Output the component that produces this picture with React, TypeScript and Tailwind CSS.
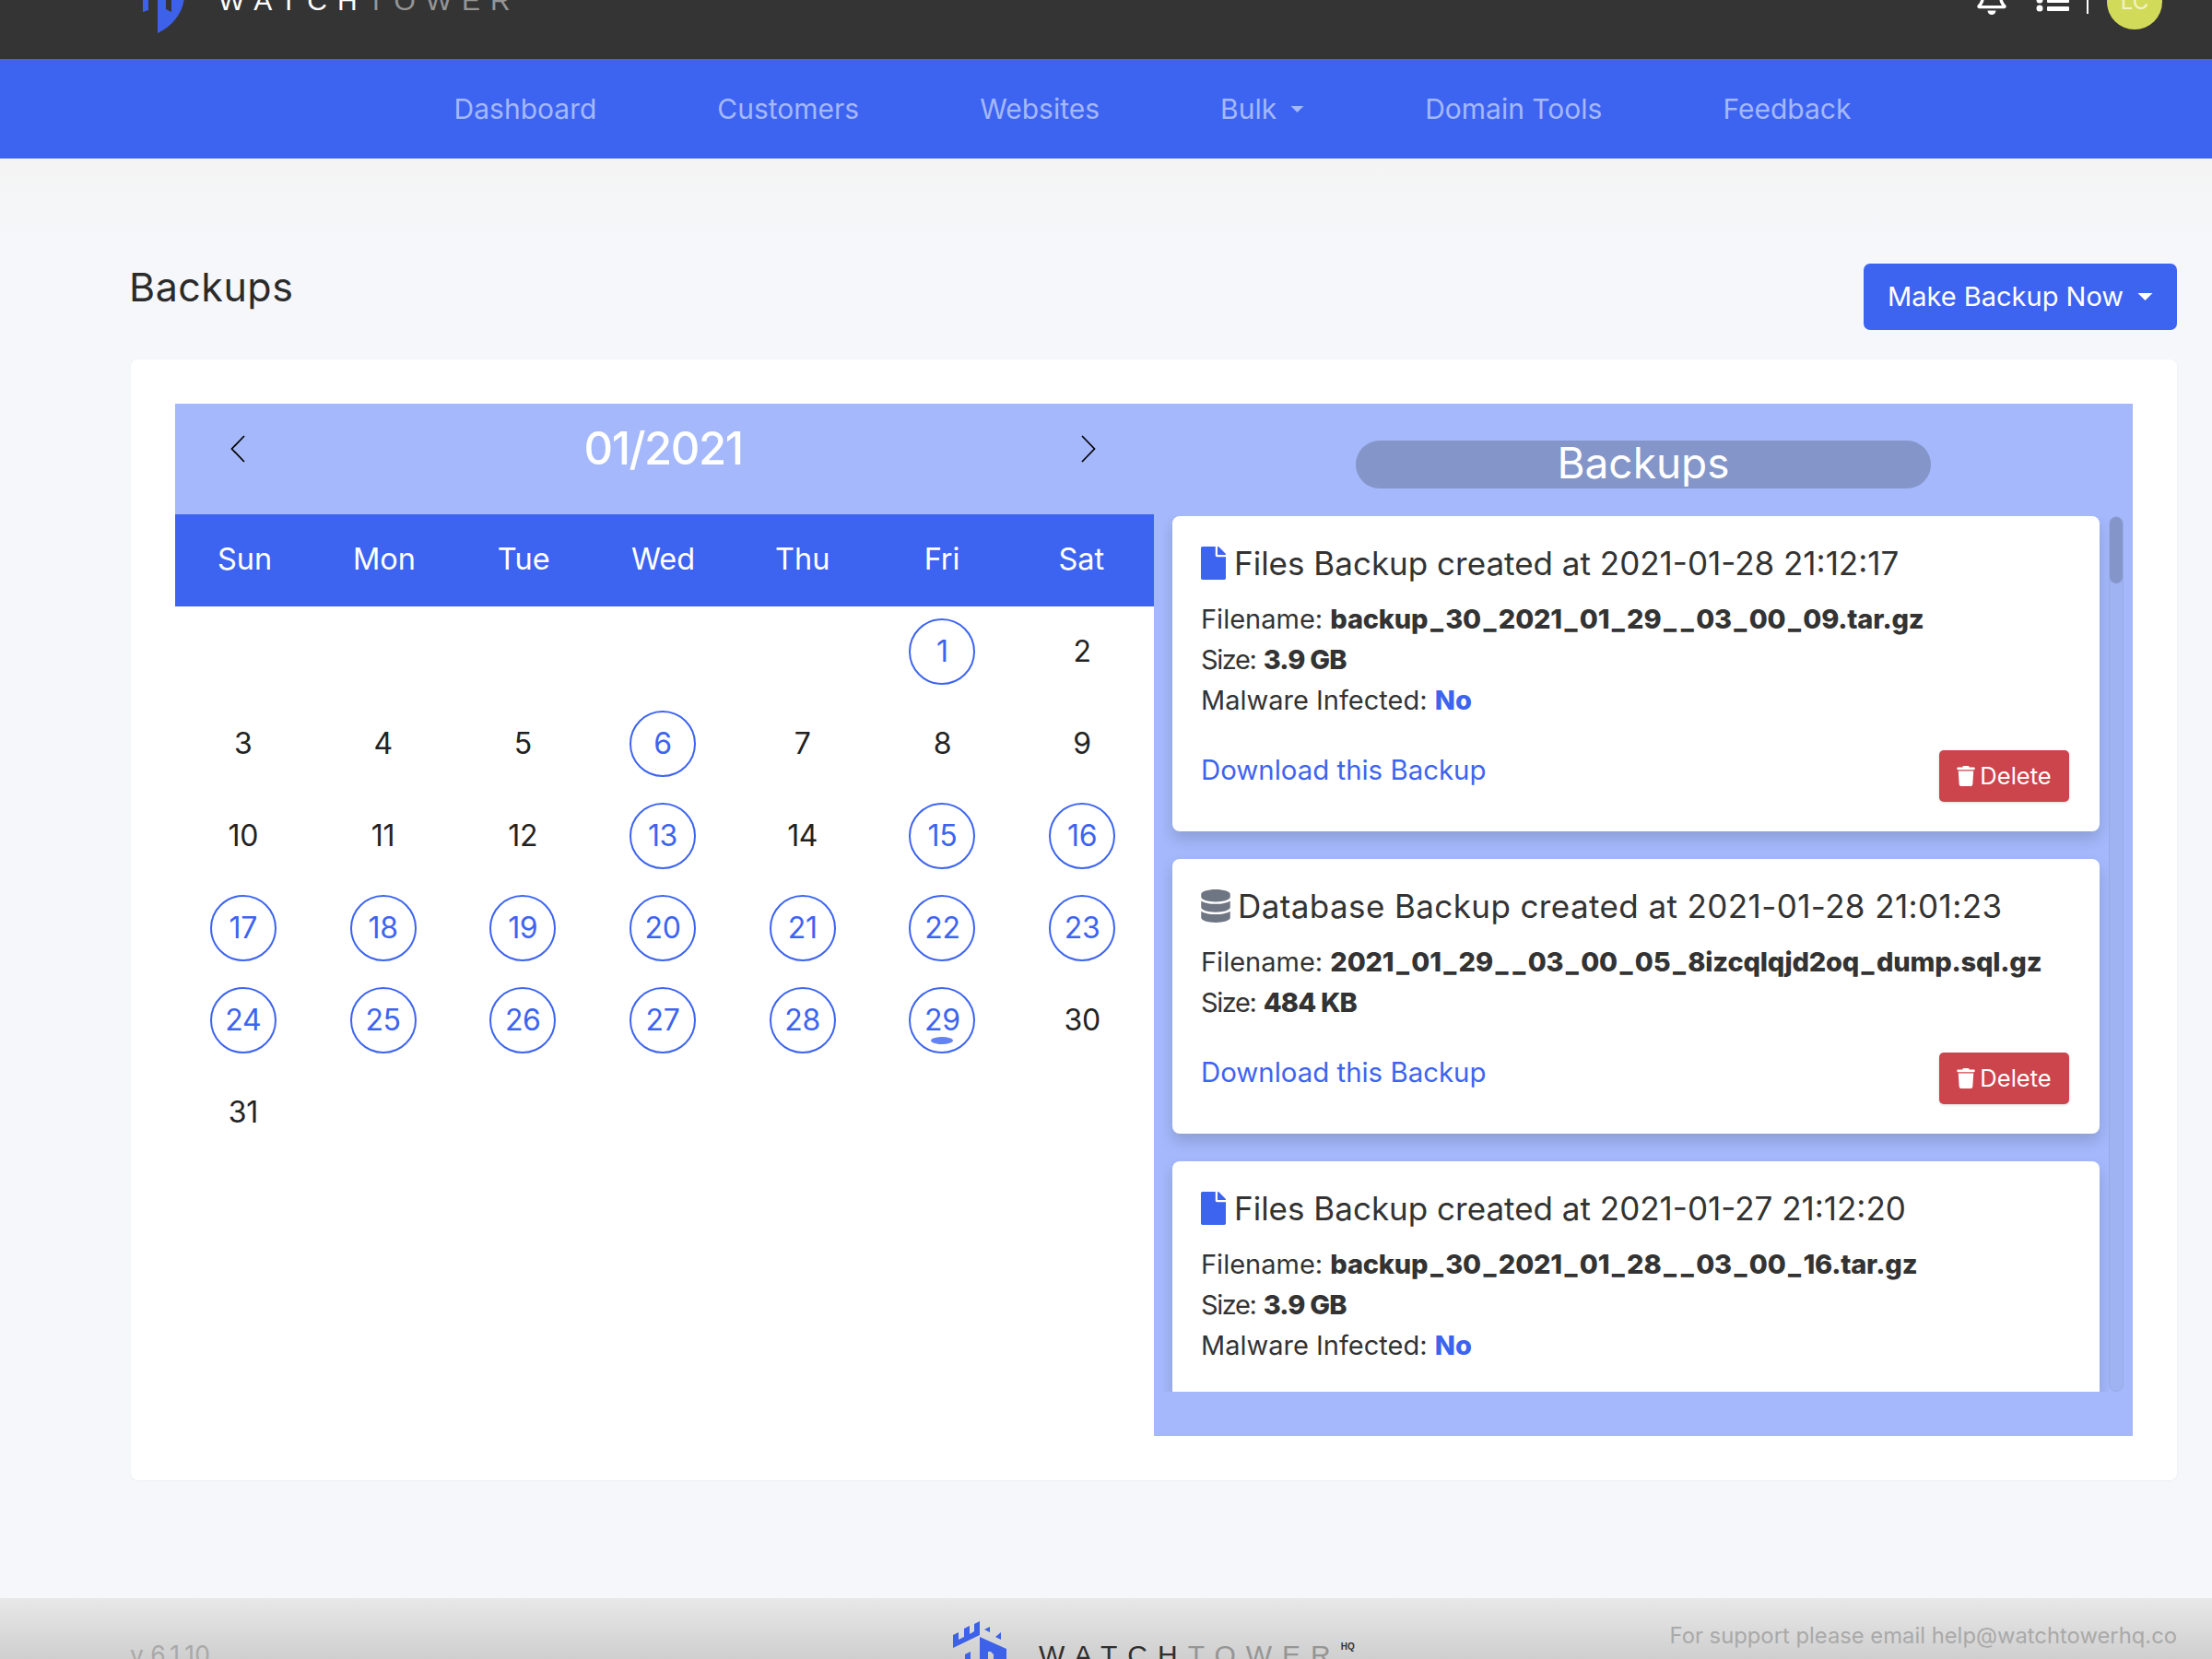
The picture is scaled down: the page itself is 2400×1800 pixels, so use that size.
import React from "react";
import { FaFile, FaDatabase, FaTrash, FaRegBell } from "react-icons/fa";

const Caret = ({ className }: { className: string }) => (
  <svg viewBox="0 0 16 8" className={className} fill="currentColor">
    <path d="M0 0h16L8 8z" />
  </svg>
);

const Logo = () => (
  <svg viewBox="0 0 58 96" className="w-[58px] h-[96px] shrink-0" fill="#3d61e8">
    <path d="M0 15L6 12V20L12 17V8L18 5V14L23 11V3L29 0V15L0 29Z" />
    <path d="M34 9L40 6V12ZM46 17L52 12V20Z" />
    <path d="M13 36L19 33V71L13 73Z" />
    <path fillRule="evenodd" d="M29 17L58 30V55C58 72 46 88 29 96ZM38 33V70L44 73V36L41 33Z" />
  </svg>
);

const Wordmark = ({ dark }: { dark: boolean }) => (
  <div className="flex font-['Liberation_Sans',sans-serif] text-[30px] leading-[30px] tracking-[11px] whitespace-nowrap">
    <span className={dark ? "text-[#2f2f2f]" : "text-white"}>WATCH</span>
    <span className="text-[#959595]">TOWER</span>
    <span className={`text-[10px] leading-[12px] font-bold tracking-normal ${dark ? "text-[#333]" : "text-[#bbb]"}`}>HQ</span>
  </div>
);

const weekdays = ["Sun", "Mon", "Tue", "Wed", "Thu", "Fri", "Sat"];
const active = new Set([1, 6, 13, 15, 16, 17, 18, 19, 20, 21, 22, 23, 24, 25, 26, 27, 28, 29]);

const Day = ({ d }: { d: number | null }) => (
  <div className="h-[100px] flex items-center justify-center">
    {d !== null &&
      (active.has(d) ? (
        <div className="relative w-[72px] h-[72px] rounded-full border-2 border-[#3d64f0] text-[#3d64f0] flex items-center justify-center">
          {d}
          {d === 29 && <span className="absolute left-[22px] bottom-[8px] w-[24px] h-[8px] rounded-[50%] bg-[#6383f5]" />}
        </div>
      ) : (
        <span>{d}</span>
      ))}
  </div>
);

const days: (number | null)[] = [null, null, null, null, null, ...Array.from({ length: 31 }, (_, i) => i + 1)];

type Backup = { kind: "file" | "db"; title: string; filename: string; size: string; malware?: boolean };
const backups: Backup[] = [
  { kind: "file", title: "Files Backup created at 2021-01-28 21:12:17", filename: "backup_30_2021_01_29__03_00_09.tar.gz", size: "3.9 GB", malware: true },
  { kind: "db", title: "Database Backup created at 2021-01-28 21:01:23", filename: "2021_01_29__03_00_05_8izcqlqjd2oq_dump.sql.gz", size: "484 KB" },
  { kind: "file", title: "Files Backup created at 2021-01-27 21:12:20", filename: "backup_30_2021_01_28__03_00_16.tar.gz", size: "3.9 GB", malware: true },
];

const FileName = ({ name }: { name: string }) => (
  <b className="font-extrabold tracking-[-0.2px]">
    {name.split("").map((c, i) =>
      c === "_" ? (
        <span key={i} className="px-[2.500px]">
          _
        </span>
      ) : (
        c
      )
    )}
  </b>
);

const Card = ({ b }: { b: Backup }) => (
  <div className="shrink-0 bg-white rounded-[8px] shadow-[0_8px_16px_rgba(0,0,0,0.15)] pt-[29px] pb-[32px] px-[31px] mb-[30px] text-[#333] text-[29px] leading-[44px]">
    <div className={`flex items-center h-[44px] mb-[17px] text-[35px] whitespace-nowrap ${b.kind === "db" ? "tracking-[0.4px]" : ""}`}>
      {b.kind === "file" ? (
        <FaFile className="text-[#3d64f0] w-[27px] h-[36px] mr-[9px]" />
      ) : (
        <FaDatabase className="text-[#6f7683] w-[32px] h-[36px] mr-[8px]" />
      )}
      {b.title}
    </div>
    <div className="whitespace-nowrap">
      Filename: <FileName name={b.filename} />
    </div>
    <div>
      <span className="tracking-[-1.400px]">Size:</span> <b className="font-extrabold tracking-[-0.8px]">{b.size}</b>
    </div>
    {b.malware && (
      <div>
        Malware Infected: <b className="font-extrabold text-[#3d64f0]">No</b>
      </div>
    )}
    <div className="flex justify-between items-start mt-[32px] pr-[2px]">
      <a className="text-[#3d64f0] text-[29.400px]">Download this Backup</a>
      <button className="w-[141px] h-[56px] rounded-[5px] bg-[#cc444c] text-white text-[25.500px] leading-[56px] flex items-center justify-center gap-[5px] shadow-[0_1px_3px_rgba(0,0,0,0.15)]">
        <FaTrash className="w-[20px] h-[22px]" />
        Delete
      </button>
    </div>
  </div>
);

export default function App() {
  return (
    <div className="h-[1800px] w-[2400px] overflow-hidden flex flex-col bg-[#f5f7fa] text-[#222] font-['Inter',sans-serif]">
      <header className="h-[64px] shrink-0 bg-[#343434] overflow-hidden flex items-end justify-between pl-[142px] pr-[54px]">
        <div className="flex items-end gap-[37px]">
          <div className="mb-[28px]">
            <Logo />
          </div>
          <div className="mb-[48px]">
            <Wordmark dark={false} />
          </div>
        </div>
        <div className="flex items-end text-white">
          <FaRegBell className="w-[32px] h-[36px] mb-[48px]" />
          <svg viewBox="0 0 36 30" className="w-[36px] h-[30px] ml-[32px] mb-[51px]" fill="currentColor">
            <circle cx="4" cy="17" r="3.500" />
            <circle cx="4" cy="26" r="3.500" />
            <rect x="12" y="15" width="24" height="5" rx="1" />
            <rect x="12" y="24" width="24" height="5" rx="1" />
          </svg>
          <div className="w-[2px] h-[40px] bg-white ml-[19px] mb-[49px]" />
          <div className="w-[60px] h-[60px] rounded-full bg-[#d2da5a] ml-[20px] mb-[32px] flex items-center justify-center text-[24px] text-[#f2f4c8]">LC</div>
        </div>
      </header>

      <nav className="h-[108px] shrink-0 bg-[#3d64f0] flex items-center justify-center pl-[101px] gap-[131px] text-[#a4b8fb] text-[30px]">
        <span>Dashboard</span>
        <span>Customers</span>
        <span>Websites</span>
        <span className="flex items-center gap-[15px]">
          Bulk <Caret className="w-[15px] h-[7px]" />
        </span>
        <span>Domain Tools</span>
        <span>Feedback</span>
      </nav>

      <main className="flex-1 pl-[142px] pr-[38px] pt-[114px] bg-gradient-to-b from-[#f4f4f4] to-[#f5f7fa] to-[6%]">
        <div className="flex justify-between items-start mb-[32px]">
          <h1 className="text-[43px] leading-[50px] ml-[-2px] text-[#2b2b2b] tracking-[0.5px]">Backups</h1>
          <button className="w-[340px] h-[72px] rounded-[7px] bg-[#3d64f0] text-white text-[29px] flex items-center justify-center gap-[15px]">
            Make Backup Now <Caret className="w-[17px] h-[8px]" />
          </button>
        </div>

        <section className="h-[1216px] bg-white rounded-[8px] p-[48px] shadow-[0_1px_3px_rgba(0,0,0,0.04)]">
          <div className="h-full flex">
            <div className="w-[1062px]">
              <div className="h-[120px] bg-[#a4b8fb] flex items-center justify-between pl-[60px] pr-[63px] pb-[22px] text-white">
                <svg viewBox="0 0 16 30" className="w-[16px] h-[30px]" fill="none" stroke="#000" strokeWidth="1.700">
                  <path d="M15 1L1.500 15L15 29" />
                </svg>
                <span className="text-[49px] font-medium tracking-[-1.5px]">01/2021</span>
                <svg viewBox="0 0 16 30" className="w-[16px] h-[30px]" fill="none" stroke="#000" strokeWidth="1.700">
                  <path d="M1 1L14.500 15L1 29" />
                </svg>
              </div>
              <div className="h-[100px] bg-[#3d64f0] grid grid-cols-7 items-center text-center pr-[3px] pb-[2px] text-white text-[32.500px]">
                {weekdays.map((w) => (
                  <span key={w}>{w}</span>
                ))}
              </div>
              <div className="grid grid-cols-7 -mt-[1px] -ml-[2px] mr-[2px] text-[32px] text-[#222] tracking-[-0.3px]">
                {days.map((d, i) => (
                  <Day key={i} d={d} />
                ))}
              </div>
            </div>

            <div className="w-[1062px] bg-[#a4b8fb] flex flex-col">
              <div className="h-[122px] shrink-0 pt-[40px] flex justify-center">
                <div className="w-[624px] h-[52px] rounded-full bg-[#8496c9] text-white text-[46px] leading-[48px] text-center">Backups</div>
              </div>
              <div className="h-[950px] ml-[10px] mr-[10px] flex overflow-hidden">
                <div className="w-[1026px] pl-[10px] pr-[10px] shrink-0 flex flex-col overflow-hidden">
                  {backups.map((b, i) => (
                    <Card key={i} b={b} />
                  ))}
                </div>
                <div className="w-[16px] shrink-0 rounded-full bg-[#9fb2f1] border border-[#98abe8]">
                  <div className="h-[72px] rounded-full bg-[#8496c9]" />
                </div>
              </div>
            </div>
          </div>
        </section>
      </main>

      <footer className="h-[66px] shrink-0 overflow-hidden bg-gradient-to-b from-[#e8e8e8] to-[#cfcfcf] flex pl-[141px] pr-[38px] text-[#a9a9a9]">
        <span className="w-[893px] shrink-0 mt-[42px] text-[26.500px]">v 6.1.10</span>
        <div className="flex items-start gap-[35px] mt-[25px]">
          <Logo />
          <div className="mt-[22px]">
            <Wordmark dark />
          </div>
        </div>
        <span className="flex-1 text-right mt-[26px] text-[23.800px] leading-[30px] whitespace-nowrap">For support please email help@watchtowerhq.co</span>
      </footer>
    </div>
  );
}
